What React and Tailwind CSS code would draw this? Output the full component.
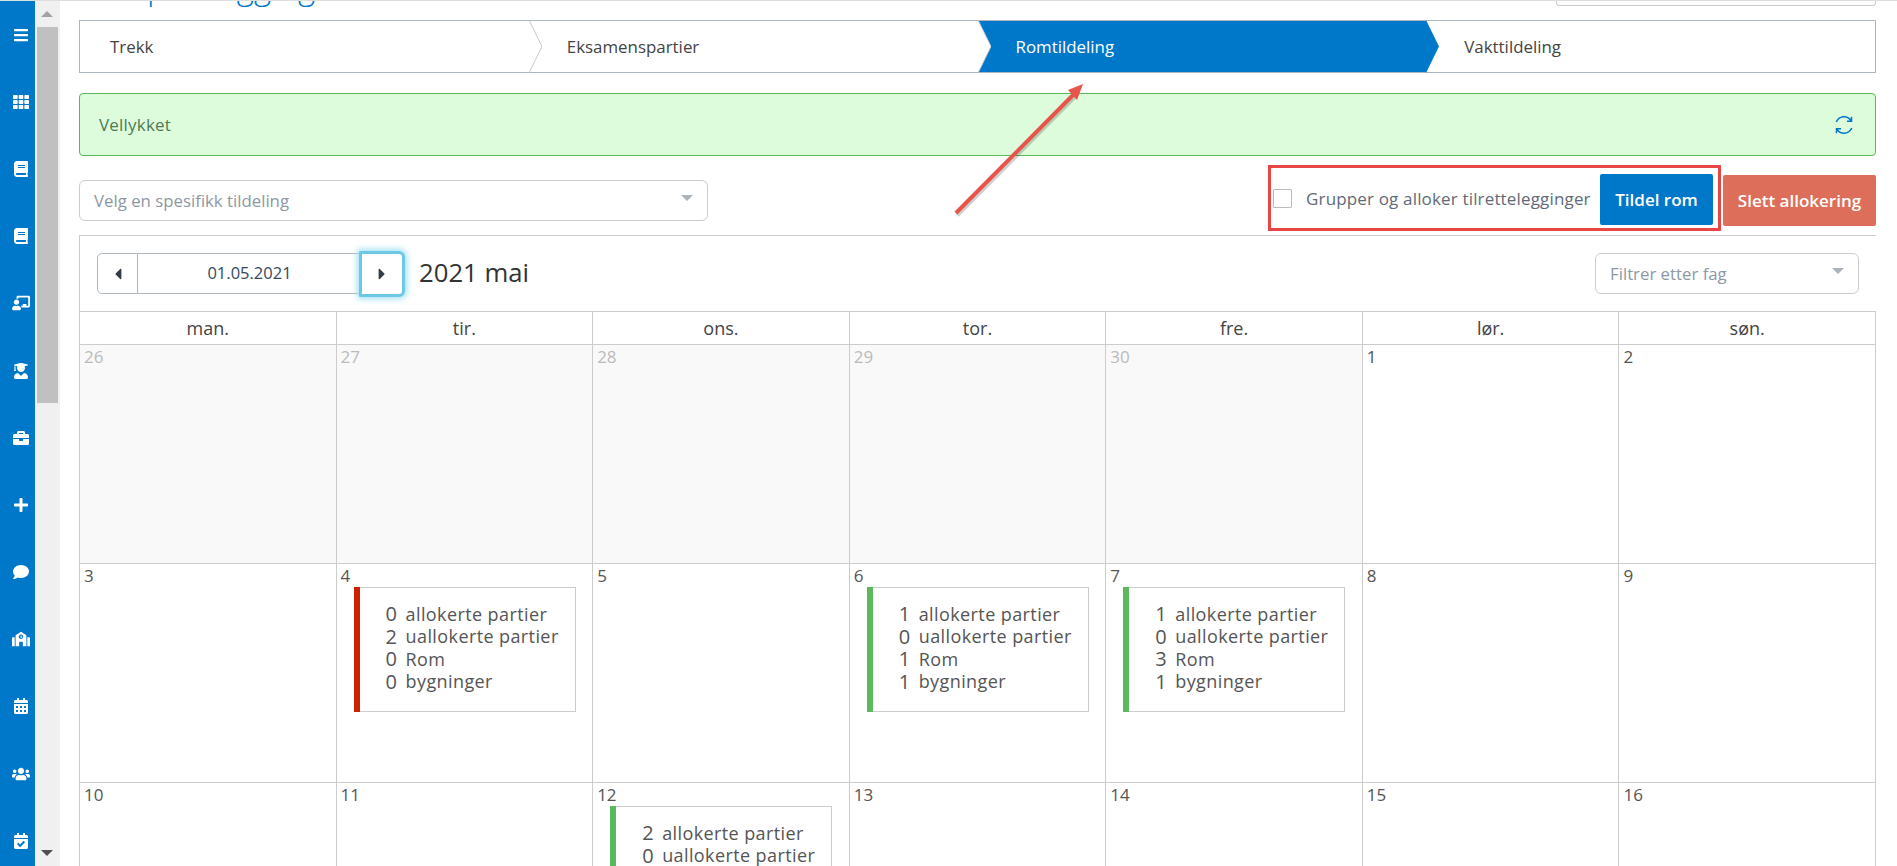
import React from 'react';
import {
    FaBars, FaTh, FaBook, FaChalkboardTeacher, FaUserGraduate, FaBriefcase, FaPlus,
    FaComment, FaSchool, FaCalendarAlt, FaUsers, FaCalendarCheck, FaCaretLeft, FaCaretRight,
} from 'react-icons/fa';
import { LiaSyncSolid } from 'react-icons/lia';

const sideIcons = [
    [FaBars, 'text-[16px]'],
    [FaTh, 'text-[16px]'],
    [FaBook, 'text-[16px]'],
    [FaBook, 'text-[16px]'],
    [FaChalkboardTeacher, 'text-[18px]'],
    [FaUserGraduate, 'text-[16px]'],
    [FaBriefcase, 'text-[16px]'],
    [FaPlus, 'text-[16px]'],
    [FaComment, 'text-[16px]'],
    [FaSchool, 'text-[18px]'],
    [FaCalendarAlt, 'text-[16px]'],
    [FaUsers, 'text-[18px]'],
    [FaCalendarCheck, 'text-[16px]'],
];

const steps = ['Trekk', 'Eksamenspartier', 'Romtildeling', 'Vakttildeling'];
const weekdays = ['man.', 'tir.', 'ons.', 'tor.', 'fre.', 'lør.', 'søn.'];

const cards = {
    4: { bar: 'bg-[#cc2200]', vals: [0, 2, 0, 0] },
    6: { bar: 'bg-[#5cb85c]', vals: [1, 0, 1, 1] },
    7: { bar: 'bg-[#5cb85c]', vals: [1, 0, 3, 1] },
    12: { bar: 'bg-[#5cb85c]', vals: [2, 0, 0, 0] },
};
const labels = ['allokerte partier', 'uallokerte partier', 'Rom', 'bygninger'];

const weeks = [
    [26, 27, 28, 29, 30, 1, 2],
    [3, 4, 5, 6, 7, 8, 9],
    [10, 11, 12, 13, 14, 15, 16],
];

const Sidebar = () => (
    <div className="w-[35px] shrink-0 bg-[#0078c9] flex flex-col items-center text-white">
        {sideIcons.map(([Icon, size], i) => (
            <div key={i} className="h-[67.2px] shrink-0 w-full flex items-center justify-center pl-[7px]">
                <Icon className={size} />
            </div>
        ))}
    </div>
);

const FakeScrollbar = () => (
    <div className="w-[25px] shrink-0 bg-[#f0f0f0] flex flex-col items-center pr-[1px]">
        <div className="h-[26px] flex items-center justify-center">
            <div className="w-0 h-0 border-x-[6px] border-x-transparent border-b-[6px] border-b-[#a3a3a3]" />
        </div>
        <div className="w-[21px] h-[376px] bg-[#c0c0c0]" />
        <div className="flex-1 flex items-end pb-[10px]">
            <div className="w-0 h-0 border-x-[6px] border-x-transparent border-t-[6px] border-t-[#505050]" />
        </div>
    </div>
);

const Steps = () => (
    <div className="grid grid-cols-4 h-[53px] border border-[#adb5bd] text-[16.9px] text-[#444]">
        {steps.map((s, i) => {
            const active = i === 2;
            return (
                <div
                    key={s}
                    className={`relative flex items-center pt-[1px] ${i === 0 ? 'pl-[30px]' : 'pl-[38px]'} ${active ? 'bg-[#0078c9] text-white' : ''}`}
                >
                    {s}
                    {i < 3 && (
                        <svg className="absolute top-[-1px] left-full z-10" width="13" height="53" viewBox="0 0 13 53">
                            <polygon points="0,0 13,26.5 0,53" fill={active ? '#0078c9' : '#fff'} />
                            {!active && <polyline points="0,0 13,26.5 0,53" fill="none" stroke="#c4cad0" />}
                        </svg>
                    )}
                </div>
            );
        })}
    </div>
);

const SelectBox = ({ text, className }) => (
    <div className={`flex items-center justify-between h-[41px] border border-[#ccc] rounded-[6px] pl-[14px] pr-[14px] text-[16.8px] text-[#8c98a4] ${className}`}>
        <span>{text}</span>
        <div className="w-0 h-0 mb-[5px] border-x-[6px] border-x-transparent border-t-[6px] border-t-[#aab2bb]" />
    </div>
);

const DateNav = () => (
    <div className="flex items-center h-[41px] w-[308px] text-[#34495e] text-[16.5px]">
        <div className="w-[41px] h-full border border-[#adb5bd] rounded-l-[5px] flex items-center justify-center text-[#333d47]">
            <FaCaretLeft className="text-[18px]" />
        </div>
        <div className="flex-1 h-full border-y border-[#adb5bd] flex items-center justify-center pl-[2px]">01.05.2021</div>
        <div className="relative z-10 w-[46px] h-[46px] border-[3px] border-[#6cc8e4] rounded-r-[6px] rounded-l-[1px] shadow-[0_0_6px_2px_#a5e0f2] flex items-center justify-center text-[#333d47] bg-white">
            <FaCaretRight className="text-[18px]" />
        </div>
    </div>
);

const DayCard = ({ bar, vals }) => (
    <div className="relative ml-[13px] w-[222px] h-[125px] border border-[#ccc] pl-[31px] pt-[15px]">
        <div className={`absolute left-[-1px] top-[-1px] bottom-[-1px] w-[6px] ${bar}`} />
        {labels.map((l, i) => (
            <div key={l} className="flex items-center h-[22.5px] text-[#555] text-[18px] tracking-[0.4px] whitespace-nowrap">
                <span className="w-[20px] text-[20px] tracking-normal">{vals[i]}</span>
                <span>{l}</span>
            </div>
        ))}
    </div>
);

const Calendar = () => (
    <div className="mt-[4px] border border-[#ccc] border-r-0 border-b-0">
        <div className="h-[75px] pl-[17px] pr-[17px] flex items-center justify-between">
            <div className="flex items-center">
                <DateNav />
                <div className="ml-[14px] text-[25.7px] text-[#333]">2021 mai</div>
            </div>
            <SelectBox text="Filtrer etter fag" className="w-[264px]" />
        </div>
        <div className="grid grid-cols-7 h-[33px] border-t border-[#ccc]">
            {weekdays.map((d) => (
                <div key={d} className="border-r border-[#ccc] flex items-center justify-center text-[18px] text-[#444]">
                    {d}
                </div>
            ))}
        </div>
        {weeks.map((w, r) => (
            <div key={r} className="grid grid-cols-7 h-[219px] border-t border-[#ccc]">
                {w.map((n, c) => {
                    const other = r === 0 && c < 5;
                    return (
                        <div key={n} className={`border-r border-[#ccc] pt-[1px] pl-[4px] ${other ? 'bg-[#f9f9f9]' : ''}`}>
                            <div className={`text-[17px] leading-[22px] ${other ? 'text-[#bbb]' : 'text-[#555]'}`}>{n}</div>
                            {cards[n] && !other && <DayCard {...cards[n]} />}
                        </div>
                    );
                })}
            </div>
        ))}
    </div>
);

const App = () => {
    return (
        <div className="relative flex h-[866px] overflow-hidden bg-white font-['Open_Sans',sans-serif] border-t border-[#ddd]">
            <Sidebar />
            <FakeScrollbar />
            <div className="flex-1 min-w-0 pl-[19px] pr-[21px]">
                {/* page title is scrolled off, only descenders show */}
                <div className="h-[19px] flex justify-between items-start">
                    <div className="h-[6px] overflow-hidden flex items-end">
                        <h1 className="text-[33px] font-light leading-[40px] text-[#0078c9] whitespace-nowrap">Romplanlegging</h1>
                    </div>
                    <div className="w-[320px] h-[5px] border border-t-0 border-[#ccc] rounded-b-[3px]" />
                </div>

                <Steps />

                <div className="mt-[20px] h-[63px] bg-[#ddfcdc] border border-[#5cb85c] rounded-[4px] flex items-center justify-between pl-[19px] pr-[19px] text-[17px] tracking-[0.2px] text-[#4f7a55]">
                    <span>Vellykket</span>
                    <LiaSyncSolid className="text-[24px] text-[#0078c9]" />
                </div>

                <div className="mt-[9px] flex items-start justify-between">
                    <SelectBox text="Velg en spesifikk tildeling" className="w-[629px] mt-[15px]" />
                    <div className="flex items-start">
                        <div className="w-[453px] h-[66px] border-[3px] border-[#e84545] flex items-center pl-[2px] pr-[5px]">
                            <div className="w-[19px] h-[19px] mt-[1px] border border-[#bbb] rounded-[1px] shrink-0" />
                            <span className="ml-[14px] mt-[1px] text-[17px] text-[#5f6b77] tracking-[0.16px] whitespace-nowrap">Grupper og alloker tilrettelegginger</span>
                            <button className="ml-auto w-[113px] h-[51px] mt-[3px] bg-[#0078c9] rounded-[2px] text-white font-semibold text-[17px]">Tildel rom</button>
                        </div>
                        <button className="mt-[10px] ml-[2px] w-[153px] h-[51px] bg-[#dc6e5a] rounded-[2px] text-white font-semibold text-[17px]">Slett allokering</button>
                    </div>
                </div>

                <Calendar />
            </div>

            {/* annotation arrow */}
            <svg className="absolute left-0 top-0 pointer-events-none" width="1897" height="866">
                <line x1="956" y1="212" x2="1074" y2="93" stroke="#00000030" strokeWidth="5" transform="translate(1 2)" />
                <line x1="956" y1="212" x2="1074" y2="93" stroke="#e8534a" strokeWidth="4" />
                <polygon points="1083,83 1068,89 1077,99" fill="#e8534a" />
            </svg>
        </div>
    );
};

export default App;
